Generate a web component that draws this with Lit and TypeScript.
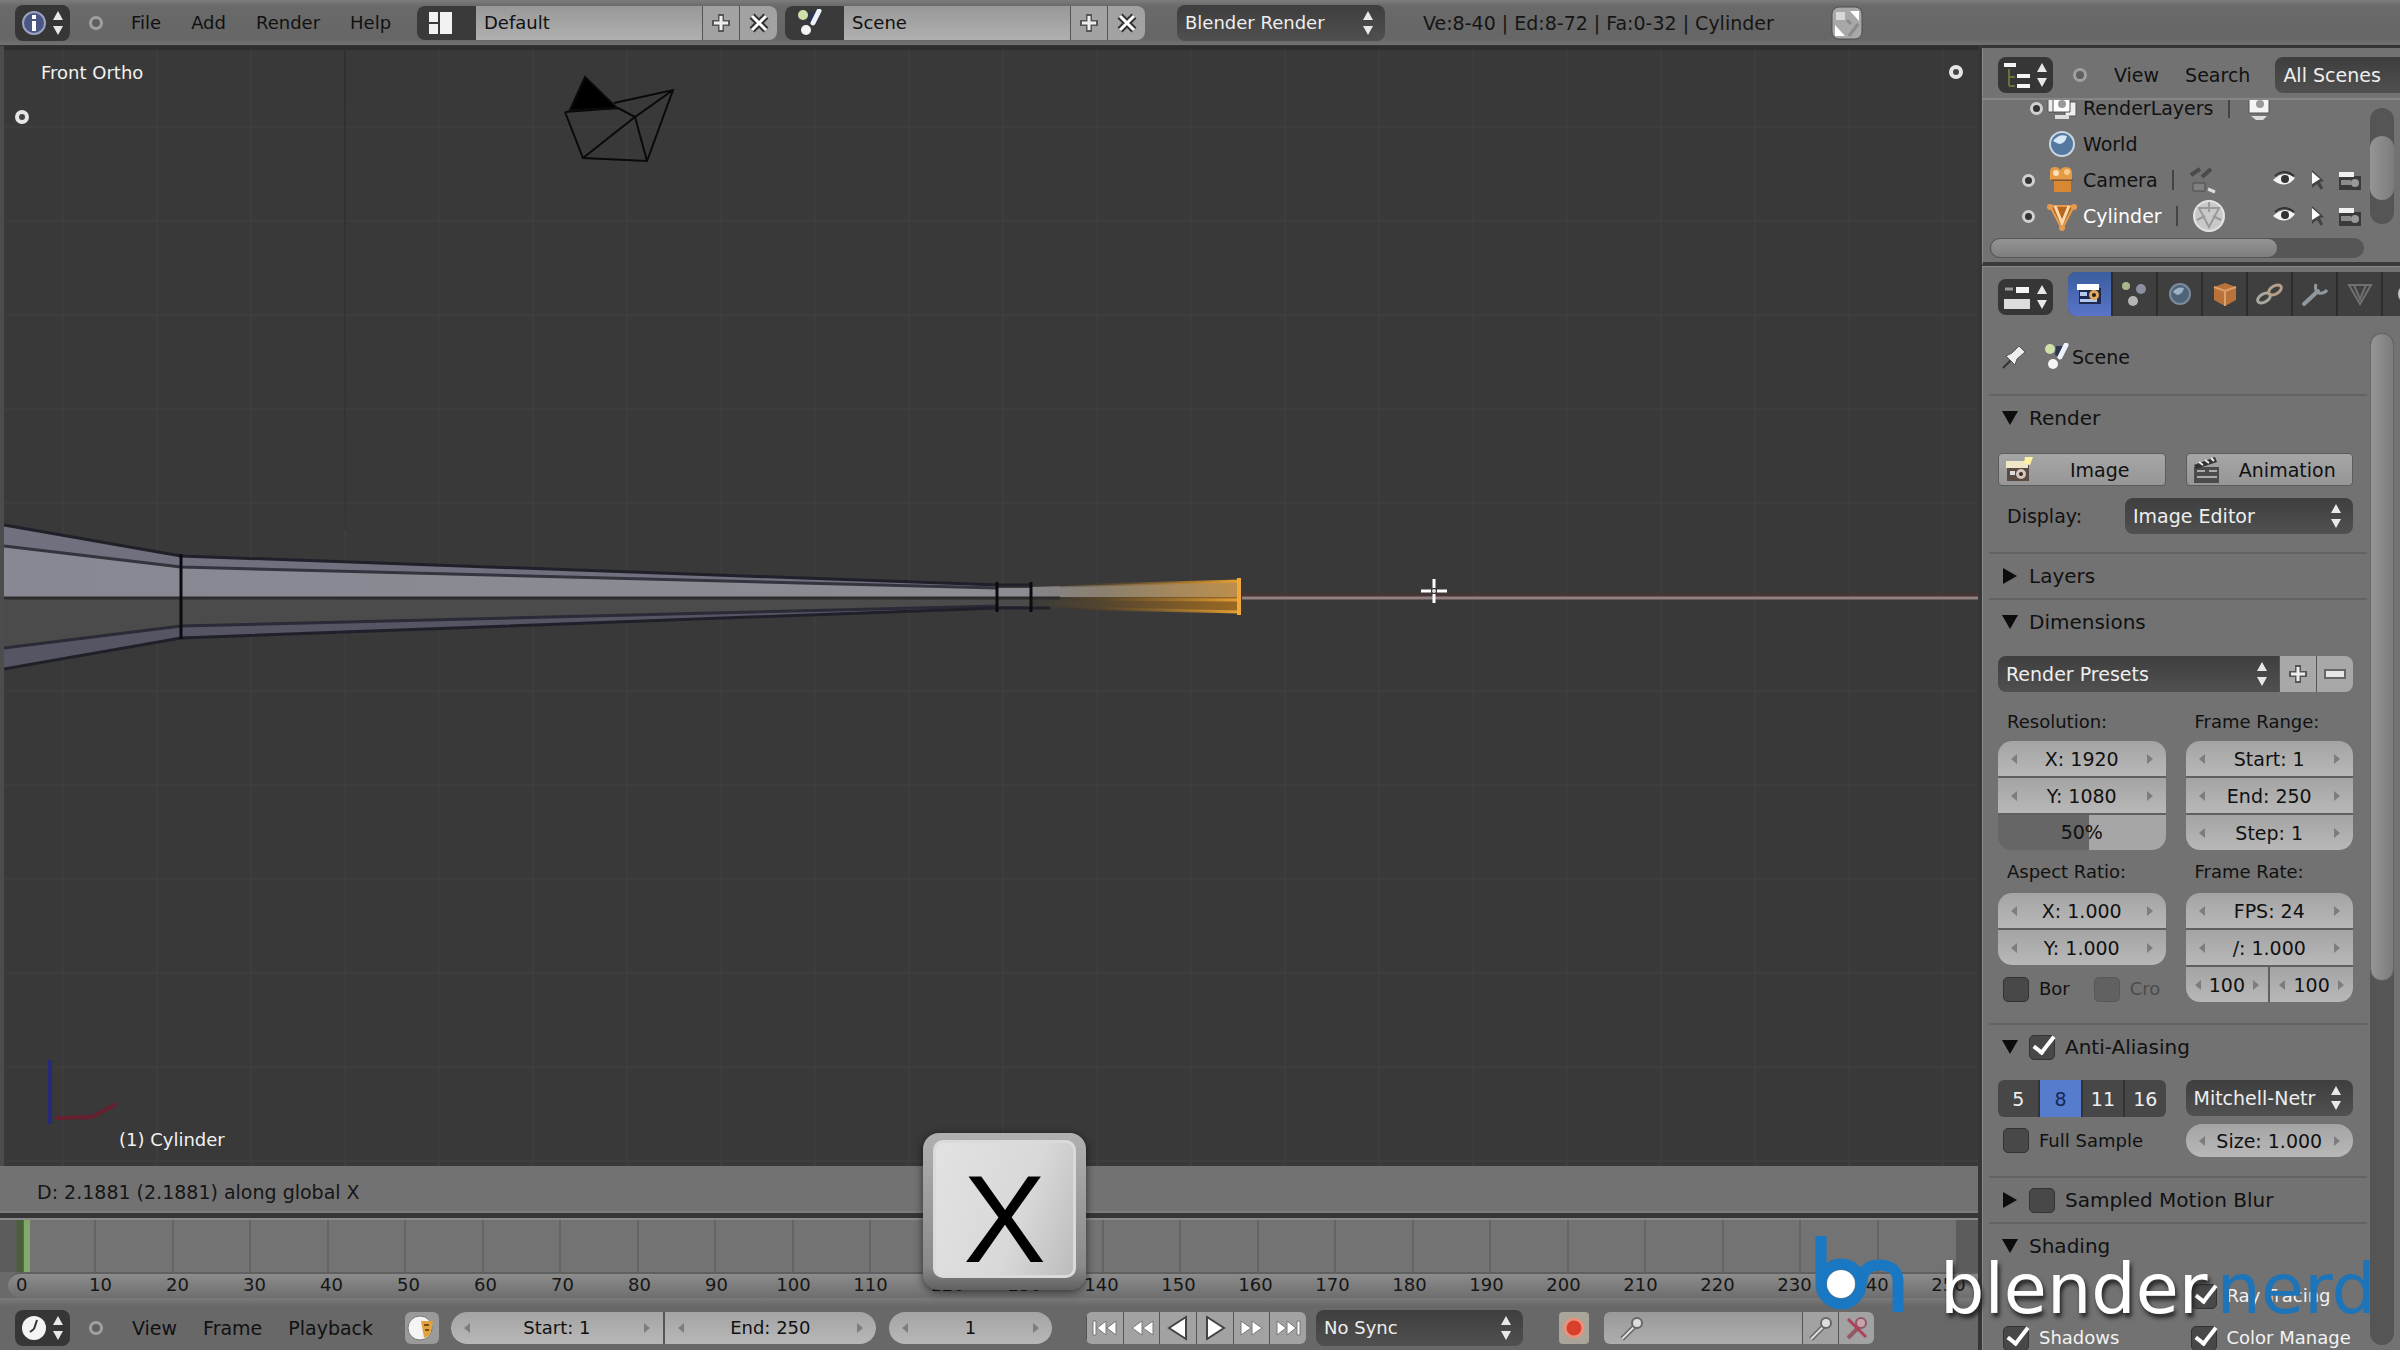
import { LitElement, html, svg, css, nothing } from "lit";
import { customElement } from "lit/decorators.js";
import { classMap } from "lit/directives/class-map.js";

const icon = (w: number, h: number, body: unknown) =>
  html`<svg class="ico" width=${w} height=${h} viewBox="0 0 ${w} ${h}" aria-hidden="true">${body}</svg>`;

const updown = () => icon(12, 26, svg`<path d="M6 1 11 10H1Z M6 25 11 16H1Z" fill="#e8e8e8"/>`);

const glyphs: Record<string, () => unknown> = {
  info: () => icon(26, 28, svg`<circle cx="13" cy="14" r="11" fill="#4a5784" stroke="#9aa2c0" stroke-width="2"/><path d="M13 6v4M13 12v10" stroke="#fff" stroke-width="4"/>`),
  layout: () => icon(26, 26, svg`<path d="M2 2h9v10H2z M2 14h9v10H2z M13 2h12v22H13z" fill="#f2f2f2"/>`),
  scene: () => icon(30, 28, svg`<circle cx="8" cy="6" r="5" fill="#cfe0a8"/><path d="M14 3 24 3 20 15 13 12Z" fill="#2d3550"/><path d="M24 2 18 14" stroke="#eef2ff" stroke-width="5" stroke-linecap="round"/><circle cx="11" cy="21" r="5" fill="#f4f4f4"/>`),
  plus: () => icon(22, 22, svg`<path d="M11 2v18M2 11h18" stroke="#555" stroke-width="6"/><path d="M11 4v14M4 11h14" stroke="#eee" stroke-width="3"/>`),
  minus: () => icon(24, 14, svg`<rect x="2" y="3" width="20" height="8" fill="#e6e6e6" stroke="#666" stroke-width="2"/>`),
  cross: () => icon(22, 22, svg`<path d="M4 4 18 18M18 4 4 18" stroke="#333" stroke-width="7"/><path d="M4 4 18 18M18 4 4 18" stroke="#fff" stroke-width="3"/>`),
  expand: () => icon(34, 34, svg`<rect x="2" y="1" width="30" height="32" rx="7" fill="#a8a8a8" stroke="#4d4d4d"/><path d="M20 5h9v10Z M5 19v11h10Z" fill="#fff"/><path d="M6 6h9v8H6z" fill="#d8d8d8"/><path d="M19 30 28 18M17 14l4 4" stroke="#8a8a8a" stroke-width="3"/>`),
  outliner: () => icon(28, 28, svg`<path d="M6 8v17M6 16h6M6 25h6" stroke="#6c7040" stroke-width="2" fill="none"/><path d="M1 2h12v4H1z M14 13h13v4H14z M14 23h13v4H14z" fill="#f4f4f4"/>`),
  props: () => icon(28, 28, svg`<path d="M2 6h8" stroke="#999" stroke-width="3"/><path d="M13 4h13v6H13z" fill="#f4f4f4"/><path d="M1 16h26v10H1z" fill="#ddd"/>`),
  clock: () => icon(26, 28, svg`<circle cx="13" cy="14" r="12" fill="#f4f4f4"/><path d="M13 15 16 6M13 15l-4 3" stroke="#333" stroke-width="2"/>`),
  layers: () => icon(30, 28, svg`<path d="M1 4h10v14H1z M18 8h11v14H18z" fill="#eee" stroke="#555"/><path d="M6 2h17v16H6z" fill="#fff" stroke="#555"/><circle cx="15" cy="10" r="4" fill="#999"/><path d="M8 21h14v4H8z" fill="#ddd"/>`),
  layer: () => icon(30, 28, svg`<path d="M5 2h20v17H5z" fill="#f4f4f4" stroke="#555"/><circle cx="16" cy="10" r="4" fill="#999"/><path d="M7 22h16l-4 4h-7z" fill="#ddd"/>`),
  world: () => icon(30, 30, svg`<circle cx="15" cy="15" r="12" fill="#55789f" stroke="#c9d6e4" stroke-width="2"/><path d="M6 12q6-8 14-5-2 8-8 8Z" fill="#d6e8f6"/>`),
  camera: () => icon(30, 30, svg`<path d="M3 7q0-5 5-5 4 0 5 3 2-3 6-3 6 0 6 6v7H3z" fill="#e59a45"/><circle cx="9" cy="8" r="3" fill="#fbe0b8"/><circle cx="20" cy="7" r="3" fill="#f6c98c"/><path d="M7 16h17v11H7z" fill="#d98732"/><path d="M4 15h22" stroke="#7c4715" stroke-width="1"/>`),
  mesh: () => icon(30, 30, svg`<path d="M3 5h24L15 28Z" fill="#b5651d" stroke="#e79a4c" stroke-width="2"/><path d="M8 5 15 22 22 5" stroke="#fbd9ad" stroke-width="3" fill="none"/><circle cx="3" cy="6" r="3" fill="#e79a4c"/><circle cx="27" cy="6" r="3" fill="#e79a4c"/><circle cx="15" cy="27" r="3" fill="#e79a4c"/>`),
  camdata: () => icon(30, 30, svg`<path d="M3 10 12 4M14 12l9-8" stroke="#4a4a4a" stroke-width="4"/><path d="M5 18h12v8H5z" fill="#808080" stroke="#4d4d4d"/><path d="M20 24l7 3" stroke="#ddd" stroke-width="3"/>`),
  meshdata: () => icon(34, 36, svg`<circle cx="17" cy="18" r="15" fill="#c9c9c9" stroke="#e4e4e4" stroke-width="2"/><path d="M7 10h20L17 29Z M17 4v10M5 22l8-4M29 22l-8-4" fill="none" stroke="#9a9a9a" stroke-width="2"/>`),
  eye: () => icon(24, 18, svg`<path d="M1 9Q12-2 23 7 14 19 1 9Z" fill="#f4f4f4"/><path d="M3 5Q12-3 22 5" fill="none" stroke="#333" stroke-width="2"/><circle cx="13" cy="8" r="4" fill="#333"/>`),
  arrow: () => icon(18, 24, svg`<path d="M4 2v18l5-4 4 6 2-2-3-6 4-1Z" fill="#444"/><path d="M4 4v12l8-5Z" fill="#fff"/>`),
  shoot: () => icon(28, 22, svg`<path d="M3 7h22v14H3z" fill="#3a3a3a"/><path d="M3 3h15v5H3z" fill="#f0f0f0"/><path d="M5 11h10v5H5z" fill="#8a8a8a"/><circle cx="19" cy="14" r="4" fill="#999"/>`),
  render: () => icon(34, 30, svg`<path d="M6 9h22v16H6z" fill="#1c2a4e"/><path d="M4 5h22v6H4z" fill="#fff"/><path d="M7 13h7v4H7z M7 20h17v3H7z" fill="#b8c8ec"/><circle cx="21" cy="16" r="5" fill="#e2a85c"/><circle cx="21" cy="16" r="2" fill="#222"/>`),
  still: () => icon(32, 30, svg`<path d="M4 10h22v16H4z" fill="#5b4a42"/><path d="M3 6h22v7H3z" fill="#efe8c8"/><path d="M7 16h5v4H7z" fill="#ddd"/><circle cx="18" cy="19" r="5" fill="#d3c8bf"/><circle cx="18" cy="19" r="2" fill="#3b2b22"/><path d="M22 2h8l-3 8-6-2Z" fill="#fff2a0"/>`),
  clapper: () => icon(32, 30, svg`<path d="M3 12h25v16H3z" fill="#4b4b4b"/><path d="M3 10 24 2l2 5L5 14Z" fill="#333"/><path d="M8 7l4 3M14 5l4 3M20 3l3 3" stroke="#eee" stroke-width="2"/><path d="M6 16h8M18 16h8M6 22h20" stroke="#aaa" stroke-width="2"/>`),
  tScene: () => icon(32, 30, svg`<circle cx="7" cy="7" r="4" fill="#a9b68c"/><circle cx="22" cy="10" r="5" fill="#8b8fa0"/><circle cx="14" cy="22" r="5" fill="#b5b5b5"/>`),
  tWorld: () => icon(30, 30, svg`<circle cx="15" cy="15" r="10" fill="#4f6478" stroke="#7c8c9c" stroke-width="2"/><path d="M8 13q4-6 11-4-2 7-7 7Z" fill="#9db2c4"/>`),
  tObject: () => icon(30, 30, svg`<path d="M15 4 26 8v13l-11 6L4 21V8Z" fill="#b9733a"/><path d="M4 8l11 4 11-4M15 12v15" stroke="#dba06c" stroke-width="2" fill="none"/>`),
  tConstraint: () => icon(32, 30, svg`<ellipse cx="10" cy="19" rx="7" ry="4" transform="rotate(-30 10 19)" fill="none" stroke="#a8a8a0" stroke-width="3"/><ellipse cx="21" cy="11" rx="7" ry="4" transform="rotate(-30 21 11)" fill="none" stroke="#b8a088" stroke-width="3"/>`),
  tModifier: () => icon(32, 30, svg`<path d="M5 25 19 12" stroke="#8f979f" stroke-width="4" stroke-linecap="round"/><path d="M17 5q-2 7 3 9 5 1 8-3" fill="none" stroke="#8f979f" stroke-width="3"/>`),
  tData: () => icon(30, 30, svg`<path d="M4 6h22L15 25Z M9 6l6 14 6-14" fill="none" stroke="#707070" stroke-width="2"/>`),
  tMaterial: () => icon(22, 30, svg`<circle cx="14" cy="15" r="10" fill="#c4c4c4"/>`),
  pin: () => icon(26, 26, svg`<path d="M2 24 11 15" stroke="#333" stroke-width="2"/><path d="M5 12 14 21 16 15 24 8 18 2 11 9Z" fill="#eee" stroke="#555"/>`),
  autokey: () => icon(32, 30, svg`<circle cx="14" cy="15" r="12" fill="#f4f4f4" stroke="#777"/><path d="M15 8h12l-3 14-6 3Z" fill="#e1a23f"/><path d="M18 12h5M19 17h4" stroke="#7a4f10" stroke-width="2"/>`),
  first: () => icon(26, 20, svg`<path d="M1 3h3v14H1z M14 3v14L5 10Z M24 3v14l-9-7Z" fill="#fff" stroke="#777"/>`),
  prev: () => icon(26, 20, svg`<path d="M13 3v14L3 10Z M24 3v14l-10-7Z" fill="#fff" stroke="#777"/>`),
  back: () => icon(24, 26, svg`<path d="M20 2v22L3 13Z" fill="#fff" stroke="#444" stroke-width="2"/>`),
  play: () => icon(24, 26, svg`<path d="M4 2v22l17-11Z" fill="#fff" stroke="#444" stroke-width="2"/>`),
  next: () => icon(26, 20, svg`<path d="M2 3v14l10-7Z M13 3v14l10-7Z" fill="#fff" stroke="#777"/>`),
  last: () => icon(26, 20, svg`<path d="M2 3v14l9-7Z M12 3v14l9-7Z M22 3h3v14h-3z" fill="#fff" stroke="#777"/>`),
  record: () => icon(26, 28, svg`<circle cx="13" cy="14" r="9" fill="#d8402c" stroke="#e8917f" stroke-width="3"/>`),
  key: () => icon(28, 28, svg`<path d="M4 25 17 12" stroke="#666" stroke-width="5"/><path d="M4 25 17 12" stroke="#ddd" stroke-width="2"/><circle cx="19" cy="9" r="5" fill="#ddd" stroke="#666" stroke-width="2"/>`),
  unkey: () => icon(28, 28, svg`<path d="M5 24 17 12" stroke="#8d5a66" stroke-width="4"/><circle cx="18" cy="9" r="5" fill="#c9a3ac" stroke="#8d5a66" stroke-width="2"/><path d="M5 5 23 23" stroke="#b0405a" stroke-width="3"/>`),
};

const dropdown = (label: string, value: string, cls = "") => html`
  <span class="dd ${cls}"><select aria-label=${label}><option>${value}</option></select>${updown()}</span>`;

const editorMenu = (name: string, glyph: string) => html`
  <button class="editor" aria-label=${name}>${glyphs[glyph]()}${updown()}</button>
  <button class="dot" aria-label="Collapse menus"></button>`;

const num = (value: string, name: string, small = false) => html`
  <span class="num ${classMap({ small })}">
    ${icon(8, 12, svg`<path d="M7 1v10L1 6Z" fill="#7d7d7d"/>`)}
    <input type="text" aria-label=${name} .value=${value} />
    ${icon(8, 12, svg`<path d="M1 1v10l6-5Z" fill="#7d7d7d"/>`)}
  </span>`;

const idBlock = (glyph: string, name: string, value: string) => html`
  <div class="idblock">
    <button class="browse" aria-label="Browse ${name}">${glyphs[glyph]()}</button>
    <input type="text" aria-label=${name} .value=${value} />
    <button class="seg" aria-label="Add ${name}">${glyphs.plus()}</button>
    <button class="seg end" aria-label="Delete ${name}">${glyphs.cross()}</button>
  </div>`;

const base = css`
  * { box-sizing: border-box; }
  button, input, select { font: inherit; color: inherit; margin: 0; padding: 0; border: 0; background: none; min-width: 0; }
  button { display: flex; align-items: center; justify-content: center; }
  .ico { display: block; flex: none; }
  .editor { width: 55px; height: 36px; border-radius: 8px; background: #363636; gap: 5px; flex: none; }
  .dot { width: 14px; height: 14px; border-radius: 7px; border: 3px solid #a0a0a0; background: #606060; flex: none; margin: 0 19px; }
  .menu { color: #111; }
  .dd { position: relative; display: flex; height: 36px; border-radius: 8px; background: linear-gradient(#3e3e3e, #505050); color: #eee; }
  .dd select { appearance: none; flex: 1; padding: 0 28px 0 8px; outline: 0; }
  .dd .ico { position: absolute; right: 11px; top: 5px; pointer-events: none; }
  .num { display: flex; align-items: center; height: 35px; padding: 0 12px; background: linear-gradient(#a4a4a4, #b8b8b8); color: #111; flex: 1; }
  .num input { flex: 1; width: 0; text-align: center; }
  .num.small { padding: 0 8px; }
  .seg { background: #a2a2a2; border-left: 1px solid #555; }
`;

@customElement("top-bar")
export class TopBar extends LitElement {
  static styles = [base, css`
    :host { display: flex; align-items: center; height: 46px; padding: 0 15px; background: linear-gradient(#7c7c7c 0, #6a6a6a 6px, #666 38px, #727272 45px); border-bottom: 1px solid #333; }
    .menus { display: flex; gap: 30px; padding-left: 9px; width: 281px; }
    .menus + .idblock { margin-left: 14px; }
    .idblock { display: flex; height: 34px; border-radius: 8px; overflow: hidden; color: #111; margin-right: 8px; }
    .idblock input { width: 226px; padding: 0 8px; background: linear-gradient(#989898, #b0b0b0); }
    .browse { width: 59px; background: #3a3a3a; justify-content: flex-start; padding-left: 10px; }
    .seg { width: 37px; }
    .seg.end { width: 38px; }
    .engine { width: 208px; margin-left: 24px; }
    .stats { color: #151515; margin: 0 56px 0 38px; white-space: nowrap; font-size: 19px; }
  `];
  render() {
    return html`
      ${editorMenu("Info editor", "info")}
      <nav class="menus">${["File", "Add", "Render", "Help"].map((m) => html`<button class="menu">${m}</button>`)}</nav>
      ${idBlock("layout", "Screen layout", "Default")}
      ${idBlock("scene", "Scene", "Scene")}
      ${dropdown("Render engine", "Blender Render", "engine")}
      <span class="stats">Ve:8-40 | Ed:8-72 | Fa:0-32 | Cylinder</span>
      <button aria-label="Back to previous screen">${glyphs.expand()}</button>`;
  }
}

@customElement("view-3d")
export class View3d extends LitElement {
  static styles = [base, css`
    :host { display: block; position: relative; min-height: 0; background: #393939; overflow: hidden; border-left: 4px solid #4c4c4c; }
    .canvas { display: block; width: 100%; height: 100%; }
    .name { position: absolute; color: #f2f2f2; line-height: 24px; }
    .view { left: 37px; top: 15px; }
    .object { left: 115px; bottom: 14px; }
  `];
  render() {
    const cols = Array.from({ length: 21 }, (_, i) => 63 + i * 94);
    const rows = Array.from({ length: 12 }, (_, i) => 127 + i * 94);
    return html`
      <svg class="canvas" viewBox="4 46 1975 1120" preserveAspectRatio="xMinYMid slice" role="img" aria-label="Front view of the cylinder">
        <defs>
          <linearGradient id="top" x1="0" x2="1"><stop offset="0" stop-color="#888894"/><stop offset="1" stop-color="#8c8c92"/></linearGradient>
          <linearGradient id="tip" x1="0" x2="1"><stop offset="0" stop-color="#85858a"/><stop offset=".35" stop-color="#8b806f"/><stop offset="1" stop-color="#bd8f4b"/></linearGradient>
          <linearGradient id="low" x1="0" x2="1"><stop offset="0" stop-color="#3b3b3b"/><stop offset=".35" stop-color="#54452f"/><stop offset="1" stop-color="#9c6a22"/></linearGradient>
          <linearGradient id="edge" gradientUnits="userSpaceOnUse" x1="1060" x2="1240" y1="0" y2="0"><stop offset="0" stop-color="#3a2f22" stop-opacity=".3"/><stop offset="1" stop-color="#e9a132"/></linearGradient>
          <linearGradient id="axis" gradientUnits="userSpaceOnUse" x1="0" x2="0" y1="46" y2="530"><stop offset="0" stop-color="#303030"/><stop offset="1" stop-color="#363636"/></linearGradient>
        </defs>
        <g stroke="#3d3d3d" stroke-width="2">
          ${cols.map((x) => svg`<path d="M${x} 46V1166"/>`)}
          ${rows.map((y) => svg`<path d="M0 ${y}H1979"/>`)}
        </g>
        <path d="M344 46H346V530H344Z" fill="url(#axis)"/>
        <path d="M4 48H1979" stroke="#2e2e2e" stroke-width="4"/>

        <path d="M4 525 181 556 998 585 998 590 181 567 4 546Z" fill="#70707f"/>
        <path d="M4 546 181 567 998 588H1031V597H4Z" fill="url(#top)"/>
        <path d="M4 597H1031V606H998L181 626 4 648Z" fill="#4b4b4b"/>
        <path d="M4 648 181 626 998 606 998 608 181 638 4 669Z" fill="#555564"/>
        <path d="M1031 587 1240 581V597H1031Z" fill="url(#tip)"/>
        <path d="M1031 597H1240V612L1031 607Z" fill="url(#low)"/>
        <g fill="none" stroke="#20202a" stroke-width="3">
          <path d="M4 525 181 556 998 585H1031"/>
          <path d="M4 546 181 567 998 588" stroke="#34343f"/>
          <path d="M4 648 181 626 998 606" stroke="#2b2b37"/>
          <path d="M4 669 181 638 998 608H1050"/>
          <path d="M4 598H1060" stroke="#2c2c2c"/>
          <path d="M181 554V639M997 582V612M1031 582V612" stroke="#0b0b0e"/>
        </g>
        <g fill="none" stroke="url(#edge)" stroke-width="3">
          <path d="M1060 586 1240 581"/><path d="M1060 608 1240 612"/><path d="M1060 599 1240 600"/>
        </g>
        <path d="M1239 578V615" stroke="#f0a93a" stroke-width="4"/>
        <path d="M1242 595H1979" stroke="#453537" stroke-width="4"/>
        <path d="M1242 598H1979" stroke="#938080" stroke-width="3"/>
        <path d="M1434 579V588M1434 594V603M1421 591H1431M1437 591H1447" stroke="#fff" stroke-width="3"/>
        <circle cx="1434" cy="591" r="2" fill="#ddd"/>

        <g fill="none" stroke="#0a0a0a" stroke-width="2">
          <path d="M585 77 570 110 617 108Z" fill="#000"/>
          <path d="M565 112 583 158 647 161 673 90 614 103M565 112 618 108M583 158 635 117 647 161M618 108 635 117 673 90"/>
        </g>
        <g fill="#444" stroke="#e6e6e6" stroke-width="4"><circle cx="22" cy="117" r="5"/><circle cx="1956" cy="72" r="5"/></g>
        <path d="M50 1060V1124" stroke="#29297c" stroke-width="4"/>
        <path d="M55 1118 92 1117 116 1104" stroke="#67202f" stroke-width="4" fill="none"/>
      </svg>
      <span class="name view">Front Ortho</span>
      <span class="name object">(1) Cylinder</span>`;
  }
}

@customElement("time-line")
export class TimeLine extends LitElement {
  static styles = [base, css`
    :host { display: block; background: #6a6a6a; overflow: hidden; }
    .track { display: block; width: 100%; height: 54px; background: #737373; border-top: 2px solid #8a8a8a; }
    .ruler { display: flex; height: 26px; line-height: 22px; margin-left: 8px; border-radius: 13px 0 0 13px; background: linear-gradient(#8c8c8c, #6e6e6e); border-top: 2px solid #606060; color: #161616; overflow: hidden; }
    .tick { flex: none; width: 77px; text-align: center; }
    .tick.zero { width: 54px; text-align: left; padding-left: 8px; }
    .bar { display: flex; align-items: center; height: 52px; padding: 8px 15px 0; background: linear-gradient(#7a7a7a, #686868 8px); }
    .menus { display: flex; gap: 26px; padding-left: 10px; font-size: 19px; }
    .auto { width: 34px; height: 32px; background: #9a9a9a; border-radius: 6px; margin: 0 12px 0 32px; }
    .range { display: flex; gap: 2px; width: 425px; border-radius: 16px; overflow: hidden; background: #555; }
    .num { height: 32px; }
    .frame { display: flex; width: 163px; border-radius: 16px; overflow: hidden; margin: 0 34px 0 13px; }
    .play { display: flex; width: 220px; height: 32px; border-radius: 6px; overflow: hidden; margin-right: 10px; }
    .play .seg { flex: 1; }
    .sync { width: 207px; margin-right: 36px; }
    .rec { width: 30px; height: 32px; background: #aaa59a; margin-right: 15px; border-radius: 4px; }
    .keys { display: flex; height: 32px; border-radius: 6px; overflow: hidden; }
    .keys label { display: flex; align-items: center; width: 198px; padding-left: 14px; background: linear-gradient(#999, #aeaeae); }
    .keys input { flex: 1; }
    .keys .seg { width: 36px; }
  `];
  render() {
    const players = [["Jump to first frame", "first"], ["Previous keyframe", "prev"], ["Play reverse", "back"], ["Play", "play"], ["Next keyframe", "next"], ["Jump to last frame", "last"]];
    return html`
      <svg class="track" preserveAspectRatio="xMinYMin slice" aria-hidden="true">
        ${Array.from({ length: 24 }, (_, i) => svg`<path d="M${95 + Math.round(i * 77.5)} 0V54" stroke="#646464" stroke-width="2"/>`)}
        <path d="M0 0H18V54H0Z M1956 0H1979V54H1956Z" fill="#5c5c5c"/>
        <path d="M20 0V54" stroke="#4a5f3c" stroke-width="7"/><path d="M27 0V54" stroke="#83a86c" stroke-width="6"/>
      </svg>
      <div class="ruler">
        <span class="tick zero">0</span>
        ${Array.from({ length: 25 }, (_, i) => html`<span class="tick">${(i + 1) * 10}</span>`)}
      </div>
      <div class="bar">
        ${editorMenu("Timeline editor", "clock")}
        <nav class="menus">${["View", "Frame", "Playback"].map((m) => html`<button class="menu">${m}</button>`)}</nav>
        <button class="auto" aria-label="Use preview range">${glyphs.autokey()}</button>
        <div class="range">${num("Start: 1", "Start frame")}${num("End: 250", "End frame")}</div>
        <div class="frame">${num("1", "Current frame")}</div>
        <div class="play">${players.map(([n, g]) => html`<button class="seg" aria-label=${n}>${glyphs[g]()}</button>`)}</div>
        ${dropdown("Sync mode", "No Sync", "sync")}
        <button class="rec" aria-label="Auto keyframe">${glyphs.record()}</button>
        <div class="keys">
          <label>${glyphs.key()}<input type="text" aria-label="Keying set" /></label>
          <button class="seg" aria-label="Insert keyframe">${glyphs.key()}</button>
          <button class="seg" aria-label="Delete keyframe">${glyphs.unkey()}</button>
        </div>
      </div>`;
  }
}

@customElement("scene-outliner")
export class SceneOutliner extends LitElement {
  static styles = [base, css`
    :host { display: block; background: #727272; border-bottom: 4px solid #3a3a3a; border-left: 1px solid #8a8a8a; overflow: hidden; }
    .bar { display: flex; align-items: center; height: 50px; padding: 4px 0 0 15px; }
    .menus { display: flex; gap: 26px; padding-left: 7px; }
    .scope { flex: none; width: 160px; margin-left: 25px; }
    .scope .ico { display: none; }
    .dot { margin: 0 20px; }
    .body { display: grid; grid-template-columns: 1fr 24px; gap: 4px; padding-right: 6px; border-top: 2px solid #868686; overflow: hidden; }
    .tree { list-style: none; margin: -10px 0 0; padding: 0 0 0 34px; color: #111; }
    .row { display: flex; align-items: center; height: 36px; }
    .fold { width: 13px; height: 13px; border-radius: 7px; border: 3px solid #d0d0d0; background: #333; }
    .foldcell { width: 30px; padding-left: 5px; }
    .foldcell.deep { padding-left: 13px; }
    .kind { width: 30px; margin-right: 6px; }
    .active { color: #fff; }
    .sep { width: 2px; height: 20px; background: #444; margin: 0 14px; }
    .toggles { display: grid; grid-template-columns: repeat(3, 33px); margin-left: auto; }
    .vscroll { height: 116px; margin-top: 8px; padding-top: 28px; border-radius: 12px; background: #555; }
    .vscroll i { display: block; height: 64px; border-radius: 12px; background: linear-gradient(90deg, #959595, #7c7c7c); }
    .hscroll { height: 20px; margin: 4px 36px 4px 7px; border-radius: 10px; background: #565656; }
    .hscroll i { display: block; width: 77%; height: 20px; border-radius: 10px; background: linear-gradient(#949494, #7e7e7e); border: 1px solid #555; }
  `];
  render() {
    const rows = [
      { name: "RenderLayers", kind: "layers", data: "layer", fold: true, deep: true },
      { name: "World", kind: "world" },
      { name: "Camera", kind: "camera", data: "camdata", fold: true, vis: true },
      { name: "Cylinder", kind: "mesh", data: "meshdata", fold: true, vis: true, active: true },
    ];
    return html`
      <div class="bar">
        ${editorMenu("Outliner editor", "outliner")}
        <nav class="menus"><button class="menu">View</button><button class="menu">Search</button></nav>
        ${dropdown("Display mode", "All Scenes", "scope")}
      </div>
      <div class="body">
        <ul class="tree">
          ${rows.map((r) => html`<li class="row ${classMap({ active: !!r.active })}">
            <span class="foldcell ${classMap({ deep: !!r.deep })}">${r.fold ? html`<button class="fold" aria-label="Expand ${r.name}"></button>` : nothing}</span>
            <span class="kind">${glyphs[r.kind]()}</span>${r.name}
            ${r.data ? html`<span class="sep"></span>${glyphs[r.data]()}` : nothing}
            ${r.vis ? html`<span class="toggles">
              <button aria-label="Visible">${glyphs.eye()}</button>
              <button aria-label="Selectable">${glyphs.arrow()}</button>
              <button aria-label="Renderable">${glyphs.shoot()}</button></span>` : nothing}
          </li>`)}
        </ul>
        <div class="vscroll"><i></i></div>
      </div>
      <div class="hscroll"><i></i></div>`;
  }
}

@customElement("scene-properties")
export class SceneProperties extends LitElement {
  static styles = [base, css`
    :host { display: flex; flex-direction: column; min-height: 0; background: #727272; border-left: 1px solid #8a8a8a; overflow: hidden; }
    .bar { display: flex; align-items: center; height: 54px; flex: none; padding: 0 0 0 15px; border-top: 1px solid #8a8a8a; gap: 15px; }
    .bar .editor { margin-top: 6px; }
    .tabs { display: flex; flex: none; height: 44px; border-radius: 8px; background: #3f3f3f; }
    .tab { width: 45px; border-right: 2px solid #2d2d2d; }
    .tab.on { background: linear-gradient(#3a5e9e, #5a73c8); border-radius: 8px 0 0 8px; }
    .body { flex: 1; min-height: 0; display: grid; grid-template-columns: 1fr 24px; padding-right: 6px; gap: 2px; }
    .panels { overflow: hidden; padding: 0 0 0 6px; color: #111; }
    .path { display: flex; align-items: center; height: 74px; padding-left: 12px; }
    .path .ico:first-child { margin-right: 15px; }
    .panel { border-top: 2px solid #636363; padding-right: 14px; padding-left: 9px; margin-right: 1px; }
    .title { display: flex; align-items: center; gap: 11px; height: 44px; margin: 0; font-weight: 400; font-size: 20px; }
    .title .ico { margin-left: 4px; }
    .stack { display: grid; padding: 13px 0 18px; row-gap: 12px; }
    .two { display: grid; grid-template-columns: 1fr 1fr; column-gap: 20px; }
    .action { height: 33px; background: linear-gradient(#a6a6a6, #969696); border-radius: 4px; border: 1px solid #5c5c5c; padding-left: 4px; }
    .action span { flex: 1; text-align: center; }
    .display { display: flex; align-items: center; }
    .display label { width: 127px; padding-left: 9px; }
    .display .dd { flex: 1; }
    .stack.dim { padding: 12px 0 10px; row-gap: 0; }
    .preset { display: flex; }
    .preset .dd { flex: 1; border-radius: 8px 0 0 8px; }
    .preset .seg { width: 37px; background: #a8a8a8; }
    .preset .seg:last-child { border-radius: 0 8px 8px 0; }
    .caption { height: 43px; line-height: 43px; padding-left: 9px; font-size: 18px; }
    .caption.first { height: 49px; line-height: 59px; }
    .group { display: grid; gap: 2px; background: #606060; border-radius: 14px; overflow: hidden; }
    .split { display: flex; gap: 2px; }
    .slider { height: 35px; line-height: 35px; text-align: center; position: relative; }
    .slider input { position: absolute; inset: 0; width: 100%; height: 100%; appearance: none; background: linear-gradient(90deg, #666 54%, #a6a6a6 54%); outline: 0; }
    .slider input::-webkit-slider-thumb { appearance: none; width: 0; }
    .slider output { position: relative; pointer-events: none; }
    .checks { display: flex; gap: 24px; align-items: center; height: 48px; padding: 0 5px; font-size: 18px; }
    .check { display: flex; align-items: center; gap: 10px; white-space: nowrap; }
    .dim-out { opacity: .4; }
    input[type="checkbox"] { appearance: none; flex: none; width: 26px; height: 25px; border-radius: 5px; background: #484848; border: 1px solid #333; display: grid; place-items: center; }
    input[type="checkbox"]:checked::after { content: ""; width: 8px; height: 18px; border: solid #fff; border-width: 0 4px 4px 0; transform: rotate(38deg); margin: -8px 0 0 4px; }
    .aa { padding: 11px 0 19px; row-gap: 7px; }
    .samples { display: flex; height: 37px; border-radius: 6px; overflow: hidden; background: #474747; color: #eee; }
    .samples button { flex: 1; border-right: 2px solid #333; }
    .samples button:last-child { border-right: 0; }
    .samples .on { background: #557ccd; color: #152a55; }
    .single { display: flex; border-radius: 16px; overflow: hidden; }
    .single .num { height: 33px; }
    .full { padding-left: 5px; font-size: 18px; }
    .shade { padding: 10px 0 0; row-gap: 6px; color: #f2f2f2; }
    .shade .check { height: 36px; padding-left: 5px; overflow: hidden; font-size: 18px; }
    .vscroll { margin: 13px 0 5px; border-radius: 12px; background: #555; }
    .vscroll i { display: block; height: 64%; border-radius: 12px; background: linear-gradient(90deg, #959595, #7c7c7c); border: 1px solid #666; }
  `];
  private title(text: string, open: boolean, check?: boolean) {
    const tri = icon(16, 16, open ? svg`<path d="M0 1H16L8 15Z" fill="#0c0c0c"/>` : svg`<path d="M1 0V16L15 8Z" fill="#0c0c0c"/>`);
    return html`<h3 class="title">${tri}${check === undefined
      ? text
      : html`<label class="check"><input type="checkbox" .checked=${check} />${text}</label>`}</h3>`;
  }
  render() {
    const tabs = ["render", "tScene", "tWorld", "tObject", "tConstraint", "tModifier", "tData", "tMaterial"];
    return html`
      <div class="bar">
        <button class="editor" aria-label="Properties editor">${glyphs.props()}${updown()}</button>
        <nav class="tabs">${tabs.map((t, i) => html`<button class="tab ${classMap({ on: i === 0 })}" aria-label=${t.replace(/^t/, "")}>${glyphs[t]()}</button>`)}</nav>
      </div>
      <div class="body">
        <div class="panels">
          <div class="path">${glyphs.pin()}${glyphs.scene()}<span>Scene</span></div>
          <section class="panel">
            ${this.title("Render", true)}
            <div class="stack">
              <div class="two">
                <button class="action">${glyphs.still()}<span>Image</span></button>
                <button class="action">${glyphs.clapper()}<span>Animation</span></button>
              </div>
              <div class="display"><label for="display">Display:</label>
                <span class="dd"><select id="display"><option>Image Editor</option></select>${updown()}</span></div>
            </div>
          </section>
          <section class="panel">${this.title("Layers", false)}</section>
          <section class="panel">
            ${this.title("Dimensions", true)}
            <div class="stack dim">
              <div class="preset">${dropdown("Render presets", "Render Presets")}
                <button class="seg" aria-label="Add preset">${glyphs.plus()}</button>
                <button class="seg" aria-label="Remove preset">${glyphs.minus()}</button></div>
              <div class="two">
                <div class="caption first">Resolution:</div><div class="caption first">Frame Range:</div>
                <div class="group">${num("X: 1920", "Resolution X")}${num("Y: 1080", "Resolution Y")}
                  <div class="slider"><input type="range" aria-label="Resolution percentage" value="50" /><output>50%</output></div></div>
                <div class="group">${num("Start: 1", "Start frame")}${num("End: 250", "End frame")}${num("Step: 1", "Frame step")}</div>
                <div class="caption">Aspect Ratio:</div><div class="caption">Frame Rate:</div>
                <div>
                  <div class="group">${num("X: 1.000", "Aspect X")}${num("Y: 1.000", "Aspect Y")}</div>
                  <div class="checks">
                    <label class="check"><input type="checkbox" />Bor</label>
                    <label class="check dim-out"><input type="checkbox" disabled />Cro</label>
                  </div>
                </div>
                <div><div class="group">${num("FPS: 24", "Frames per second")}${num("/: 1.000", "Frame rate base")}
                  <div class="split">${num("100", "Old mapping", true)}${num("100", "New mapping", true)}</div></div></div>
              </div>
            </div>
          </section>
          <section class="panel">
            ${this.title("Anti-Aliasing", true, true)}
            <div class="stack aa">
              <div class="two">
                <div class="samples">${["5", "8", "11", "16"].map((s) => html`<button class=${classMap({ on: s === "8" })}>${s}</button>`)}</div>
                ${dropdown("Filter", "Mitchell-Netr")}
              </div>
              <div class="two">
                <label class="check full"><input type="checkbox" />Full Sample</label>
                <div class="single">${num("Size: 1.000", "Filter size")}</div>
              </div>
            </div>
          </section>
          <section class="panel">${this.title("Sampled Motion Blur", false, false)}</section>
          <section class="panel">
            ${this.title("Shading", true)}
            <div class="stack shade">
              <div class="two"><span></span>
                <label class="check"><input type="checkbox" checked />Ray Tracing</label></div>
              <div class="two">
                <label class="check"><input type="checkbox" checked />Shadows</label>
                <label class="check"><input type="checkbox" checked />Color Manage</label></div>
            </div>
          </section>
        </div>
        <div class="vscroll"><i></i></div>
      </div>`;
  }
}

@customElement("app-root")
export class AppRoot extends LitElement {
  static styles = [base, css`
    :host { display: grid; position: relative; grid-template: auto minmax(0, 1fr) / minmax(0, 1fr); height: 100vh; overflow: hidden; background: #363636; font: 18px/24px "DejaVu Sans", sans-serif; }
    .work { display: grid; grid-template-columns: minmax(0, 1fr) 418px; column-gap: 4px; min-height: 0; }
    .left { display: grid; grid-template-rows: minmax(0, 1fr) auto auto; min-height: 0; }
    .status { height: 47px; line-height: 52px; padding-left: 37px; background: #727272; border-bottom: 2px solid #7c7c7c; margin-bottom: 5px; font-size: 19px; color: #151515; }
    .right { display: grid; grid-template-rows: auto minmax(0, 1fr); min-height: 0; padding-top: 2px; font-size: 19px; }
    .keycap { position: absolute; left: 923px; bottom: 60px; width: 163px; height: 157px; border-radius: 16px; background: linear-gradient(#b0b0b0, #8a8a8a 85%, #606060); padding: 7px 10px 12px; box-shadow: 0 2px 8px #0009; }
    .face { display: grid; place-items: center; height: 138px; border-radius: 10px; background: linear-gradient(110deg, #e2e2e2, #d8d8d8 60%, #bcbcbc); border: 3px solid #dadada; font: 124px/120px "Liberation Sans", sans-serif; color: #000; padding-top: 16px; }
    .brand { position: absolute; right: 24px; bottom: 26px; display: flex; align-items: flex-end; gap: 34px; color: #fff; font: 70px/70px "DejaVu Sans", sans-serif; text-shadow: 2px 4px 4px #222; }
    .brand .ico { margin-bottom: 6px; }
    .brand .word { display: flex; gap: 9px; }
    .brand b { font-weight: 400; color: #1d74b8; text-shadow: none; }
  `];
  render() {
    return html`
      <top-bar></top-bar>
      <main class="work">
        <div class="left">
          <view-3d></view-3d>
          <div class="status">D: 2.1881 (2.1881) along global X</div>
          <time-line></time-line>
        </div>
        <aside class="right">
          <scene-outliner></scene-outliner>
          <scene-properties></scene-properties>
        </aside>
      </main>
      <div class="keycap"><div class="face">X</div></div>
      <div class="brand">
        ${icon(94, 84, svg`<g fill="none" stroke="#1a77c2" stroke-width="11">
          <path d="M9 2V50A20 20 0 1 0 29 30 20 20 0 0 0 9 50"/>
          <path d="M50 50V46Q52 31 67 31 86 31 86 48V78"/></g>
          <circle cx="29" cy="50" r="14" fill="#fff"/>`)}
        <span class="word">blender<b>nerd</b></span>
      </div>`;
  }
}
